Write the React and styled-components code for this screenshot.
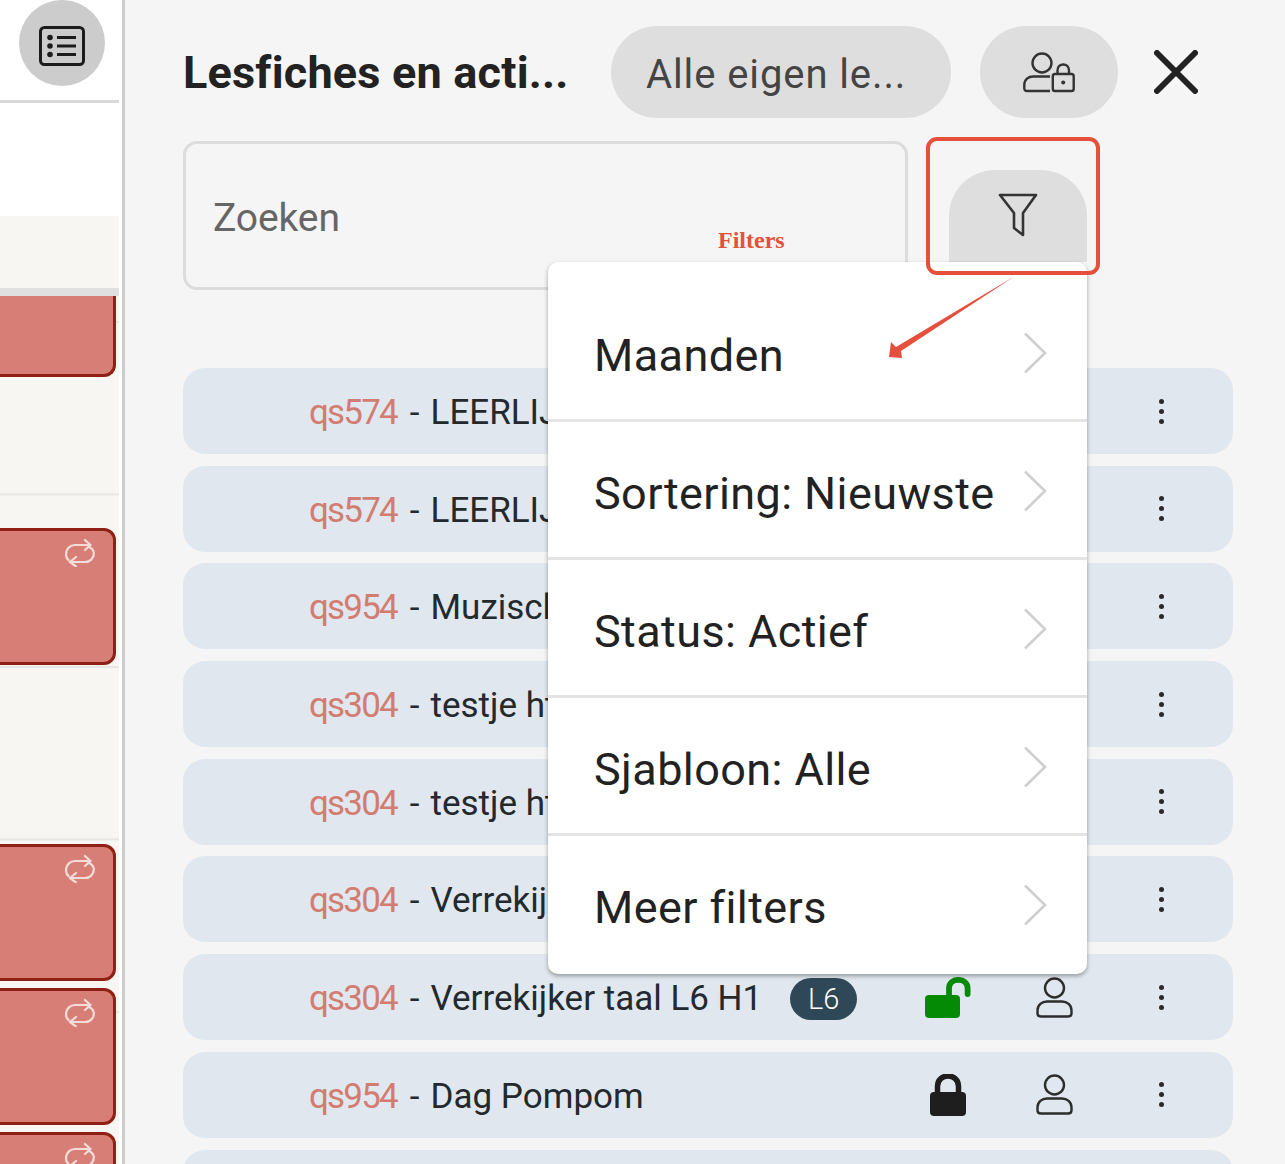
import React from "react";
import styled, { createGlobalStyle } from "styled-components";

const GlobalStyle = createGlobalStyle`
  html, body {
    margin: 0;
    padding: 0;
    background: #f5f5f5;
  }
  body {
    font-family: "Roboto", "Liberation Sans", sans-serif;
    overflow: hidden;
  }
`;

const Page = styled.div`
  position: relative;
  display: flex;
  width: 1285px;
  height: 1164px;
  overflow: hidden;
`;

/* left: calendar strip */
const CalendarColumn = styled.div`
  flex: 0 0 125px;
  box-sizing: border-box;
  padding-right: 3px;
  border-right: 3px solid #cdcdcd;
  background: #fff;
  overflow: hidden;
`;

const CalendarTop = styled.div`
  box-sizing: border-box;
  height: 103px;
  padding-left: 19px;
  border-bottom: 3px solid #d9d9d9;
`;

const RoundButton = styled.div`
  display: flex;
  align-items: center;
  justify-content: center;
  box-sizing: border-box;
  width: 86px;
  height: 86px;
  padding-top: 5px;
  border-radius: 50%;
  background: #cccccc;
`;

const Timeline = styled.div`
  display: flex;
  flex-direction: column;
  margin-top: 113px;
  padding-top: 72px;
  height: 948px;
  box-sizing: border-box;
  background-color: #f7f6f2;
  background-image: linear-gradient(#e6e6e3 2px, transparent 2px);
  background-size: 100% 172.5px;
  background-position: 0 105px;
`;

const DayBand = styled.div`
  flex: 0 0 8px;
  background: #e0e0e0;
`;

const EventCard = styled.div`
  flex: 0 0 ${(p) => p.$height}px;
  box-sizing: border-box;
  display: flex;
  justify-content: flex-end;
  align-items: flex-start;
  width: 136px;
  margin-left: -20px;
  margin-top: ${(p) => p.$gap}px;
  padding: 8px 18px;
  background: rgba(213, 120, 112, 0.95);
  border: 3px solid #8e2015;
  border-top-width: ${(p) => (p.$cut ? 0 : 3)}px;
  border-radius: ${(p) => (p.$cut ? "0 0 12px 12px" : "12px")};
`;

/* right: lesson panel */
const Panel = styled.div`
  position: relative;
  flex: 1;
  box-sizing: border-box;
  padding: 26px 52px 0 58px;
  background: #f5f5f5;
`;

const Header = styled.div`
  display: flex;
  align-items: center;
  height: 92px;
`;

const Title = styled.h1`
  flex: 0 0 428px;
  margin: 0;
  font-size: 45px;
  font-weight: 700;
  letter-spacing: 0.2px;
  color: #222;
  white-space: nowrap;
`;

const ScopePill = styled.div`
  flex: 0 0 340px;
  box-sizing: border-box;
  height: 92px;
  padding-left: 35px;
  border-radius: 46px;
  background: #dedede;
  font-size: 40px;
  line-height: 98px;
  letter-spacing: 0.9px;
  color: #444;
  white-space: nowrap;
`;

const IconPill = styled.div`
  display: flex;
  align-items: center;
  justify-content: center;
  flex: 0 0 138px;
  height: 92px;
  margin-left: 29px;
  border-radius: 46px;
  background: #dedede;
`;

const CloseButton = styled.div`
  display: flex;
  margin-left: 36px;
`;

const SearchRow = styled.div`
  display: flex;
  margin-top: 23px;
`;

const SearchBox = styled.div`
  flex: 0 0 725px;
  box-sizing: border-box;
  height: 149px;
  padding: 51px 0 0 27px;
  border: 3px solid #dcdcdc;
  border-radius: 14px;
  font-size: 39px;
  line-height: 47px;
  letter-spacing: -0.1px;
  color: #666;
`;

const FilterTab = styled.div`
  display: flex;
  justify-content: center;
  box-sizing: border-box;
  flex: 0 0 138px;
  height: 92px;
  margin: 29px 0 0 41px;
  padding-top: 23px;
  border-radius: 46px 46px 0 0;
  background: #dedede;
`;

const LessonList = styled.div`
  display: flex;
  flex-direction: column;
  gap: 11.7px;
  margin-top: 78px;
`;

const LessonRow = styled.div`
  flex: 0 0 86px;
  display: flex;
  align-items: center;
  padding: 0 18px 0 126px;
  border-radius: 22px;
  background: #e0e7ee;
  font-size: 35px;
  color: #23292d;
  white-space: nowrap;
`;

const LessonTitle = styled.span`
  padding-top: 3px;
`;

const Code = styled.span`
  margin-right: 4px;
  letter-spacing: -1.8px;
  color: #d37c71;
`;

const Dash = styled.span`
  margin-right: 2.5px;
`;

const LevelBadge = styled.span`
  display: inline-block;
  width: 67px;
  height: 42px;
  margin: 4px 0 0 28px;
  border-radius: 21px;
  background: #2f4858;
  color: #fff;
  font-size: 29px;
  font-weight: 300;
  line-height: 42px;
  text-align: center;
`;

const RowActions = styled.div`
  display: grid;
  grid-template-columns: repeat(3, 107px);
  justify-items: center;
  align-items: center;
  margin-left: auto;
`;

const DotStack = styled.div`
  display: flex;
  flex-direction: column;
  gap: 5px;
  i {
    display: block;
    width: 5px;
    height: 5px;
    border-radius: 50%;
    background: #2a2a2a;
  }
`;

const FilterMenu = styled.div`
  position: absolute;
  left: 423px;
  top: 262px;
  box-sizing: border-box;
  width: 539px;
  height: 712px;
  padding-top: 22px;
  border-radius: 10px;
  background: #fff;
  box-shadow: 0 2px 4px rgba(0, 0, 0, 0.35);
`;

const MenuItem = styled.div`
  display: flex;
  align-items: center;
  justify-content: space-between;
  box-sizing: border-box;
  height: 138px;
  padding: 8px 40px 0 46px;
  border-bottom: 3px solid ${(p) => (p.$last ? "transparent" : "#e4e4e4")};
  font-size: 45px;
  letter-spacing: 0.4px;
  color: #222;
  white-space: nowrap;
`;

const ChevronSvg = styled.svg`
  margin-top: -6px;
`;

/* annotation drawn on top of the screenshot */
const HighlightBox = styled.div`
  position: absolute;
  left: 926px;
  top: 137px;
  box-sizing: border-box;
  width: 174px;
  height: 138px;
  border: 4px solid #e5503c;
  border-radius: 11px;
`;

const FiltersNote = styled.div`
  position: absolute;
  left: 718px;
  top: 227px;
  font-family: "Liberation Serif", serif;
  font-size: 24px;
  font-weight: 700;
  line-height: 26px;
  color: #e5503c;
`;

const ArrowSvg = styled.svg`
  position: absolute;
  left: 885px;
  top: 272px;
`;

const ListIcon = () => (
  <svg width="46" height="40" viewBox="0 0 46 40" fill="none" stroke="#1c1c1c">
    <rect x="1.5" y="1.5" width="43" height="37" rx="4" strokeWidth="3" />
    <path d="M18 11.5H37M18 20H37M18 28.5H37" strokeWidth="3" />
    <circle cx="11" cy="11.5" r="2.8" fill="#1c1c1c" stroke="none" />
    <circle cx="11" cy="20" r="2.8" fill="#1c1c1c" stroke="none" />
    <circle cx="11" cy="28.5" r="2.8" fill="#1c1c1c" stroke="none" />
  </svg>
);

const LoopIcon = () => (
  <svg width="30" height="28" viewBox="0 0 30 28" fill="none" stroke="#f6dcd9" strokeWidth="2.2" strokeLinecap="round" strokeLinejoin="round">
    <path d="M3.5 21C1.5 19.5 1 17 1 15C1 10 5 6 10 6H25" />
    <path d="M20 1L25.5 6L20 11" />
    <path d="M25 8.5C27.5 10 28.8 12.5 28.8 14.5C28.8 19.5 25 23 20 23H5" />
    <path d="M11 18L5 23L11 27.5" />
  </svg>
);

const UserLockIcon = () => (
  <svg width="52" height="42" viewBox="0 0 52 42" fill="none" stroke="#333" strokeWidth="2.4" strokeLinejoin="round">
    <circle cx="19" cy="12" r="9.5" />
    <path d="M27 40H4C2.3 40 1.3 39 1.3 37.3V34C1.3 28.5 5.5 25.5 10 25.5H27" />
    <path d="M32 23H48.5C50 23 50.7 24 50.7 25.3V37.7C50.7 39 50 40 48.5 40H32C30.5 40 29.8 39 29.8 37.7V25.3C29.8 24 30.5 23 32 23Z" />
    <path d="M34.5 23V19.5C34.5 11.5 46 11.5 46 19.5V23" />
    <circle cx="40.2" cy="31.5" r="2" fill="#333" stroke="none" />
  </svg>
);

const CloseIcon = () => (
  <svg width="44" height="44" viewBox="0 0 44 44" fill="none" stroke="#222" strokeWidth="6" strokeLinecap="round">
    <path d="M3 3L41 41M41 3L3 41" />
  </svg>
);

const FunnelIcon = () => (
  <svg width="40" height="44" viewBox="0 0 40 44" fill="none" stroke="#333" strokeWidth="2.6" strokeLinejoin="round">
    <path d="M2 2H38L25 20V42L16 35V20Z" />
  </svg>
);

const UserIcon = () => (
  <svg width="37" height="41" viewBox="0 0 37 41" fill="none" stroke="#2d2d2d" strokeWidth="2.4">
    <circle cx="18.5" cy="11" r="9.5" />
    <path d="M5 39.5H32C34 39.5 35.5 38.5 35.5 36.5V33.5C35.5 28 31 24.5 26 24.5H11C6 24.5 1.5 28 1.5 33.5V36.5C1.5 38.5 3 39.5 5 39.5Z" />
  </svg>
);

const LockClosed = () => (
  <svg width="36" height="42" viewBox="0 0 36 42" fill="#1e1e1e">
    <path d="M7.5 19V12.5C7.5 -1.5 28.5 -1.5 28.5 12.5V19" fill="none" stroke="#1e1e1e" strokeWidth="5.5" />
    <rect x="0" y="18" width="36" height="24" rx="4" />
  </svg>
);

const LockOpen = () => (
  <svg width="46" height="41" viewBox="0 0 46 41" fill="#058a05">
    <rect x="0" y="18" width="35" height="23" rx="4" />
    <path d="M24 19V11.5C24 0 42.6 0 42.6 11.5V17" fill="none" stroke="#058a05" strokeWidth="5.8" strokeLinecap="round" />
  </svg>
);

const Chevron = () => (
  <ChevronSvg width="24" height="42" viewBox="0 0 24 42" fill="none" stroke="#cfcfcf" strokeWidth="2.6">
    <path d="M2 1.5L22 21L2 40.5" />
  </ChevronSvg>
);

const lessons = [
  { code: "qs574", name: "LEERLIJN" },
  { code: "qs574", name: "LEERLIJN" },
  { code: "qs954", name: "Muzisch" },
  { code: "qs304", name: "testje ht" },
  { code: "qs304", name: "testje ht" },
  { code: "qs304", name: "Verrekijker" },
  { code: "qs304", name: "Verrekijker taal L6 H1", badge: "L6", open: true },
  { code: "qs954", name: "Dag Pompom" },
];

const menuItems = ["Maanden", "Sortering: Nieuwste", "Status: Actief", "Sjabloon: Alle", "Meer filters"];

const events = [
  { gap: 0, height: 81, cut: true },
  { gap: 151, height: 137, loop: true },
  { gap: 179, height: 137, loop: true },
  { gap: 7, height: 137, loop: true },
  { gap: 7, height: 137, loop: true },
];

export default function App() {
  return (
    <Page>
      <GlobalStyle />
      <CalendarColumn>
        <CalendarTop>
          <RoundButton>
            <ListIcon />
          </RoundButton>
        </CalendarTop>
        <Timeline>
          <DayBand />
          {events.map((ev, i) => (
            <EventCard key={i} $gap={ev.gap} $height={ev.height} $cut={ev.cut}>
              {ev.loop && <LoopIcon />}
            </EventCard>
          ))}
        </Timeline>
      </CalendarColumn>

      <Panel>
        <Header>
          <Title>Lesfiches en acti...</Title>
          <ScopePill>Alle eigen le...</ScopePill>
          <IconPill>
            <UserLockIcon />
          </IconPill>
          <CloseButton>
            <CloseIcon />
          </CloseButton>
        </Header>

        <SearchRow>
          <SearchBox>Zoeken</SearchBox>
          <FilterTab>
            <FunnelIcon />
          </FilterTab>
        </SearchRow>

        <LessonList>
          {lessons.map((l, i) => (
            <LessonRow key={i}>
              <LessonTitle>
                <Code>{l.code}</Code> <Dash>-</Dash> {l.name}
              </LessonTitle>
              {l.badge && <LevelBadge>{l.badge}</LevelBadge>}
              <RowActions>
                {l.open ? <LockOpen /> : <LockClosed />}
                <UserIcon />
                <DotStack>
                  <i />
                  <i />
                  <i />
                </DotStack>
              </RowActions>
            </LessonRow>
          ))}
          <LessonRow />
        </LessonList>

        <FilterMenu>
          {menuItems.map((label, i) => (
            <MenuItem key={label} $last={i === menuItems.length - 1}>
              {label}
              <Chevron />
            </MenuItem>
          ))}
        </FilterMenu>
      </Panel>

      <HighlightBox />
      <FiltersNote>Filters</FiltersNote>
      <ArrowSvg width="135" height="90" viewBox="0 0 135 90">
        <polygon points="130,4 16,79 17,86 4,85 6,70 11,75" fill="#e5503c" />
      </ArrowSvg>
    </Page>
  );
}
